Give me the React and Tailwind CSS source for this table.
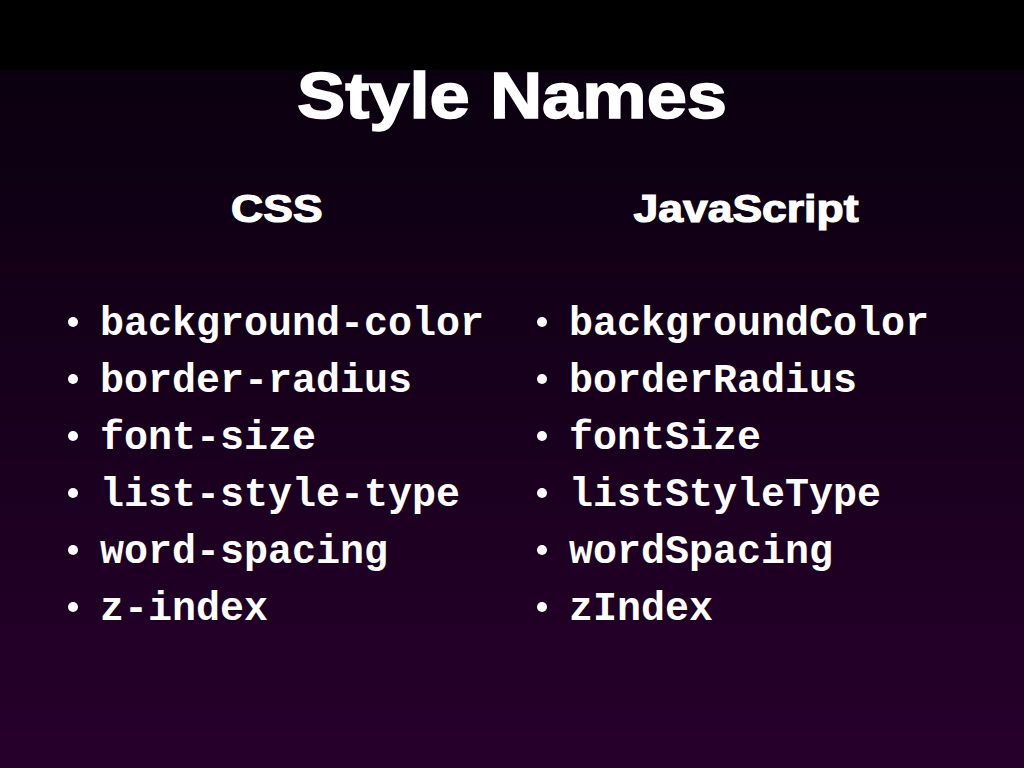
import React from 'react';

const css = ['background-color', 'border-radius', 'font-size', 'list-style-type', 'word-spacing', 'z-index'];
const js = ['backgroundColor', 'borderRadius', 'fontSize', 'listStyleType', 'wordSpacing', 'zIndex'];

function Column({ title, items, width, headPad }) {
    return (
        <div className={`flex flex-col ${width}`}>
            {/* column heading */}
            <h2 className={`text-center text-[38px] leading-[38px] font-bold text-white scale-x-[1.17] [-webkit-text-stroke:1.2px_white] font-['Liberation_Sans',Arial,sans-serif] ${headPad}`}>
                {title}
            </h2>
            <ul className="mt-[68px] pl-[28px]">
                {items.map((item) => (
                    <li key={item} className="flex items-center h-[57px]">
                        <span className="w-[10px] h-[10px] rounded-full bg-white -mt-[5px] shrink-0" />
                        <span className="ml-[22px] text-[40px] leading-[57px] font-bold text-white font-['Liberation_Mono','Courier_New',monospace]">
                            {item}
                        </span>
                    </li>
                ))}
            </ul>
        </div>
    );
}

export default function App() {
    return (
        <div className="w-full h-[768px] overflow-hidden flex flex-col bg-[linear-gradient(to_bottom,#000_0px,#000_70px,#0a000f_70px,#27002c_100%)]">
            <h1 className="pt-[64px] text-center text-[64px] leading-[64px] font-bold text-white scale-x-[1.13] [-webkit-text-stroke:1.5px_white] font-['Liberation_Sans',Arial,sans-serif]">
                Style Names
            </h1>
            <div className="flex mt-[62px] pl-[40px]">
                <Column title="CSS" items={css} width="w-[469px]" headPad="pl-[4px]" />
                <Column title="JavaScript" items={js} width="w-[474px]" headPad="" />
            </div>
        </div>
    );
}
